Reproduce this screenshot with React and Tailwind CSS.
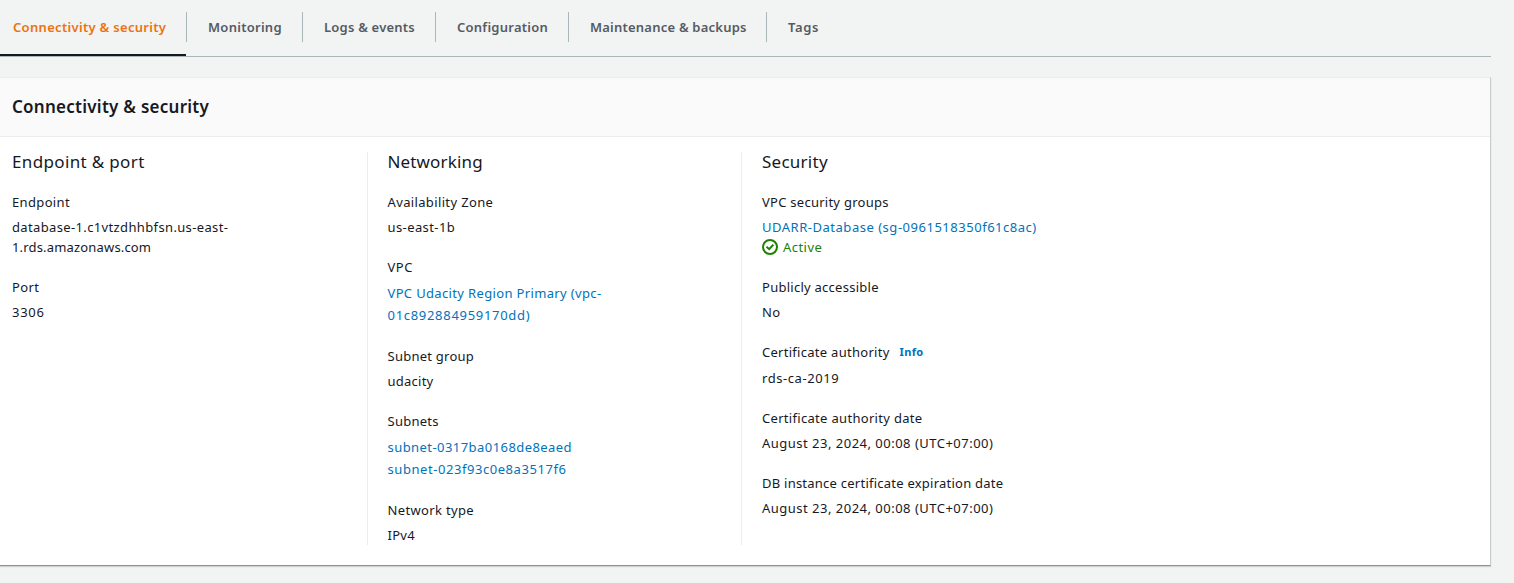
const TABS = [
  { label: "Connectivity & security", width: "w-[186px] pl-[13px]", track: "tracking-[0.31px]", active: true },
  { label: "Monitoring", width: "w-[116px] pl-[21px]", track: "tracking-[0.27px]" },
  { label: "Logs & events", width: "w-[133px] pl-[21px]", track: "tracking-[0.22px]" },
  { label: "Configuration", width: "w-[133px] pl-[21px]", track: "tracking-[0.25px]" },
  { label: "Maintenance & backups", width: "w-[198px] pl-[21px]", track: "tracking-[0.22px]" },
  { label: "Tags", width: "w-[80px] pl-[21px]", track: "tracking-[0.6px]" },
];

function Tabs() {
  return (
    <nav className="mr-[23px] flex h-[57px] border-b border-[#aab7b8]">
      {TABS.map((tab, i) => (
        <div
          key={tab.label}
          className={`flex h-[56px] shrink-0 flex-col ${tab.active ? "border-b-2 border-[#16191f]" : ""}`}
        >
          <div
            className={`mt-3 flex h-[30px] items-center whitespace-nowrap text-[13px] font-semibold ${tab.width} ${tab.track} ${
              tab.active ? "text-[#ec7211]" : "text-[#545b64]"
            } ${i > 0 ? "border-l border-[#aab7b8]" : ""}`}
          >
            {tab.label}
          </div>
        </div>
      ))}
    </nav>
  );
}

function Field({ label, track = "", gap = "mb-[5px]", children }) {
  return (
    <div>
      <div className={`flex h-5 items-center ${track} ${gap}`}>{label}</div>
      {children}
    </div>
  );
}

function Line({ children, className = "" }) {
  return <div className={`h-5 ${className}`}>{children}</div>;
}

function Link({ children, size = "h-[22px] leading-[22px]", className = "" }) {
  return <a className={`block text-[#0073bb] ${size} ${className}`}>{children}</a>;
}

function Column({ title, track, className, children }) {
  return (
    <section className={className}>
      <h3 className={`-mt-px mb-[19px] h-[22px] text-[17px] leading-[22px] ${track}`}>{title}</h3>
      <div className="flex flex-col gap-5">{children}</div>
    </section>
  );
}

function ActiveIcon() {
  return (
    <svg viewBox="0 0 16 16" className="mr-[5px] size-4" fill="none" stroke="#1d8102" strokeWidth="2">
      <circle cx="8" cy="8" r="7" />
      <path d="M4.5 7.8 7.2 10.2 11.4 5.6" />
    </svg>
  );
}

export default function App() {
  return (
    <main className="h-[583px] overflow-hidden bg-[#f2f3f3] font-['Noto_Sans',sans-serif] text-[13px] leading-5 whitespace-nowrap text-[#16191f]">
      <Tabs />
      <div className="mt-5 mr-[23px] h-[489px] border-t border-r border-b border-t-[#eaeded] border-r-[#c5cccc] border-b-[#879596] bg-white shadow-[0_1px_1px_0_rgba(0,28,36,0.15)]">
        <header className="flex h-[59px] items-center border-b border-[#eaeded] bg-[#fafafa] pl-3">
          <h2 className="text-[17px] font-semibold tracking-[0.26px]">Connectivity &amp; security</h2>
        </header>
        <div className="flex h-[408px] pt-[15px]">
          <Column title="Endpoint & port" track="tracking-[0.35px]" className="w-[367px] pl-3">
            <Field label="Endpoint" track="tracking-[0.35px]">
              <Line className="tracking-[0.36px]">database-1.c1vtzdhhbfsn.us-east-</Line>
              <Line className="tracking-[0.17px]">1.rds.amazonaws.com</Line>
            </Field>
            <Field label="Port" track="tracking-[0.4px]">
              <Line className="tracking-[0.7px]">3306</Line>
            </Field>
          </Column>
          <Column title="Networking" track="tracking-[0.15px]" className="w-[374px] border-l border-[#eaeded] pl-[19.5px]">
            <Field label="Availability Zone" track="tracking-[0.36px]">
              <Line className="tracking-[0.4px]">us-east-1b</Line>
            </Field>
            <Field label="VPC" track="tracking-[0.5px]">
              <Link className="tracking-[0.35px]">VPC Udacity Region Primary (vpc-</Link>
              <Link className="tracking-[0.7px]">01c892884959170dd)</Link>
            </Field>
            <Field label="Subnet group" track="tracking-[0.25px]">
              <Line className="tracking-[0.25px]">udacity</Line>
            </Field>
            <Field label="Subnets" track="tracking-[0.25px]">
              <Link className="tracking-[0.44px]">subnet-0317ba0168de8eaed</Link>
              <Link className="tracking-[0.56px]">subnet-023f93c0e8a3517f6</Link>
            </Field>
            <Field label="Network type" track="tracking-[0.34px]">
              <Line className="tracking-[0.25px]">IPv4</Line>
            </Field>
          </Column>
          <Column title="Security" track="tracking-[0.25px]" className="flex-1 border-l border-[#eaeded] pl-[20px]">
            <Field label="VPC security groups" track="tracking-[0.26px]">
              <Link size="h-5" className="tracking-[0.52px]">
                UDARR-Database (sg-0961518350f61c8ac)
              </Link>
              <Line className="flex items-center tracking-[0.45px] text-[#1d8102]">
                <ActiveIcon />
                Active
              </Line>
            </Field>
            <Field label="Publicly accessible" track="tracking-[0.26px]">
              <Line className="tracking-[0.3px]">No</Line>
            </Field>
            <Field
              gap="mb-[6px]"
              track="tracking-[0.28px]"
              label={
                <>
                  <span>Certificate authority</span>
                  <a className="ml-[10px] text-[11px] font-bold tracking-[0.35px] text-[#0073bb]">Info</a>
                </>
              }
            >
              <Line className="tracking-[0.56px]">rds-ca-2019</Line>
            </Field>
            <Field label="Certificate authority date" track="tracking-[0.31px]">
              <Line className="tracking-[0.49px]">August 23, 2024, 00:08 (UTC+07:00)</Line>
            </Field>
            <Field label="DB instance certificate expiration date" track="tracking-[0.24px]">
              <Line className="tracking-[0.49px]">August 23, 2024, 00:08 (UTC+07:00)</Line>
            </Field>
          </Column>
        </div>
      </div>
    </main>
  );
}
